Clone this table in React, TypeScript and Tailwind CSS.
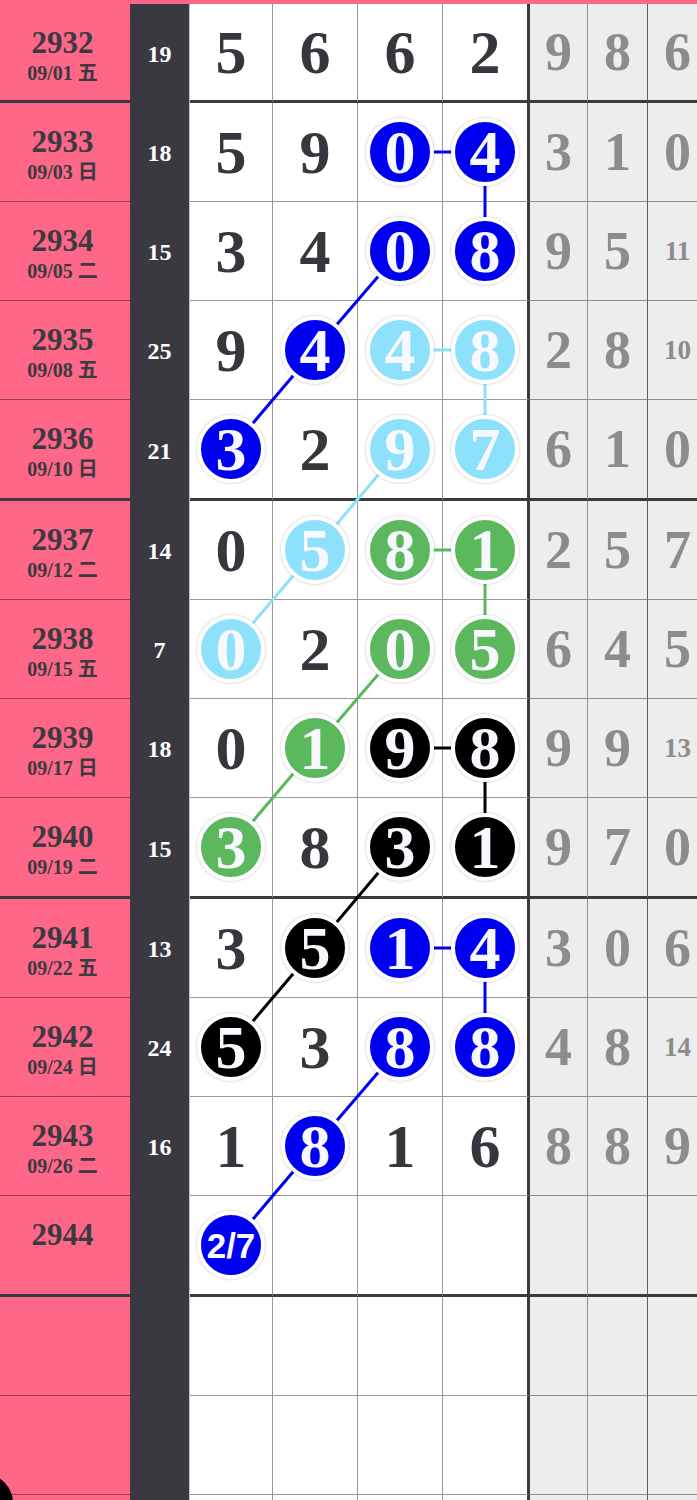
import React from "react";

type Row = {
  id?: string;
  date?: string;
  sum?: number;
  nums?: (number | string)[];
  grey?: number[];
  balls?: Record<number, string>;
};

const BLUE = "#0000f0";
const SKY = "#8ee1fa";
const GREEN = "#5cb85c";
const BLACK = "#000000";

const rows: Row[] = [
  { id: "2932", date: "09/01 五", sum: 19, nums: [5, 6, 6, 2], grey: [9, 8, 6] },
  { id: "2933", date: "09/03 日", sum: 18, nums: [5, 9, 0, 4], grey: [3, 1, 0], balls: { 2: BLUE, 3: BLUE } },
  { id: "2934", date: "09/05 二", sum: 15, nums: [3, 4, 0, 8], grey: [9, 5, 11], balls: { 2: BLUE, 3: BLUE } },
  { id: "2935", date: "09/08 五", sum: 25, nums: [9, 4, 4, 8], grey: [2, 8, 10], balls: { 1: BLUE, 2: SKY, 3: SKY } },
  { id: "2936", date: "09/10 日", sum: 21, nums: [3, 2, 9, 7], grey: [6, 1, 0], balls: { 0: BLUE, 2: SKY, 3: SKY } },
  { id: "2937", date: "09/12 二", sum: 14, nums: [0, 5, 8, 1], grey: [2, 5, 7], balls: { 1: SKY, 2: GREEN, 3: GREEN } },
  { id: "2938", date: "09/15 五", sum: 7, nums: [0, 2, 0, 5], grey: [6, 4, 5], balls: { 0: SKY, 2: GREEN, 3: GREEN } },
  { id: "2939", date: "09/17 日", sum: 18, nums: [0, 1, 9, 8], grey: [9, 9, 13], balls: { 1: GREEN, 2: BLACK, 3: BLACK } },
  { id: "2940", date: "09/19 二", sum: 15, nums: [3, 8, 3, 1], grey: [9, 7, 0], balls: { 0: GREEN, 2: BLACK, 3: BLACK } },
  { id: "2941", date: "09/22 五", sum: 13, nums: [3, 5, 1, 4], grey: [3, 0, 6], balls: { 1: BLACK, 2: BLUE, 3: BLUE } },
  { id: "2942", date: "09/24 日", sum: 24, nums: [5, 3, 8, 8], grey: [4, 8, 14], balls: { 0: BLACK, 2: BLUE, 3: BLUE } },
  { id: "2943", date: "09/26 二", sum: 16, nums: [1, 8, 1, 6], grey: [8, 8, 9], balls: { 1: BLUE } },
  { id: "2944", nums: ["2/7", "", "", ""], balls: { 0: BLUE } },
  {},
  {},
  {},
];

// row 0 closes a group, then groups of four
const isEnd = (i: number) => i === 0 || i % 4 === 0;

const colX = [231, 315, 400, 485];

// center of each row's content box
const centers: number[] = [];
{
  let top = 4;
  rows.forEach((_, i) => {
    const h = i === 0 ? 99 : isEnd(i) ? 101 : 99;
    const b = isEnd(i) ? 3 : 1;
    centers.push(top + (h - b) / 2);
    top += h;
  });
}

const links: { c: string; a: [number, number]; b: [number, number] }[] = [];
[
  [1, BLUE],
  [3, SKY],
  [5, GREEN],
  [7, BLACK],
  [9, BLUE],
].forEach(([r, c]) => {
  const s = r as number;
  const col = c as string;
  links.push({ c: col, a: [2, s], b: [3, s] });
  links.push({ c: col, a: [3, s], b: [3, s + 1] });
  links.push({ c: col, a: [2, s + 1], b: [1, s + 2] });
  links.push({ c: col, a: [1, s + 2], b: [0, s + 3] });
});

function Ball({ color, children }: { color: string; children: React.ReactNode }) {
  const small = typeof children === "string" && children.includes("/");
  return (
    <div
      className="relative z-[2] flex h-[68px] w-[68px] items-center justify-center rounded-full border-4 border-white shadow-[0_0_2px_1px_rgba(0,0,0,0.13)]"
      style={{ backgroundColor: color }}
    >
      {small ? (
        <span className="font-['Liberation_Sans',sans-serif] text-[35px] leading-none text-[#f8f8ff]">
          {children}
        </span>
      ) : (
        <span className="text-[62px] leading-none text-[#f8f8ff]">{children}</span>
      )}
    </div>
  );
}

export default function App() {
  return (
    <div className="relative h-[1500px] w-[697px] overflow-hidden bg-white font-['Liberation_Serif','Noto_Sans_CJK_SC',serif] font-bold">
      <div className="h-[4px] bg-[#fe6787]" />

      {rows.map((row, i) => {
        const end = isEnd(i);
        const h = i === 0 ? "h-[99px]" : end ? "h-[101px]" : "h-[99px]";
        const bb = end ? "border-b-[3px] border-b-[#3a3a40]" : "border-b border-b-black/40";
        return (
          <div key={i} className={`flex ${h}`}>
            {/* issue + date */}
            <div className={`flex w-[130px] shrink-0 flex-col items-center bg-[#fe6787] pr-[5px] pt-[23px] text-[#3a3a40] ${bb}`}>
              {row.id && <div className="text-[31px] leading-none">{row.id}</div>}
              {row.date && <div className="mt-[5px] text-[20px] leading-none">{row.date}</div>}
            </div>

            {/* sum */}
            <div className="flex w-[60px] shrink-0 items-center justify-center border-r border-r-[#c4c4c4] bg-[#3a393f] pt-[1px] text-[24px] leading-none text-white">
              {row.sum}
            </div>

            {/* numbers */}
            {[0, 1, 2, 3].map((c) => {
              const w = ["w-[83px]", "w-[85px]", "w-[85px]", "w-[87px]"][c];
              const br = c === 3 ? "border-r-[3px] border-r-[#3a3a40]" : "border-r border-r-black/40";
              const v = row.nums?.[c];
              const ball = row.balls?.[c];
              return (
                <div key={c} className={`flex ${w} shrink-0 items-center justify-center bg-white ${br} ${bb}`}>
                  {ball ? (
                    <Ball color={ball}>{v}</Ball>
                  ) : (
                    <span className="text-[62px] leading-none text-[#36363c]">{v}</span>
                  )}
                </div>
              );
            })}

            {/* trailing grey columns */}
            {[0, 1, 2].map((c) => {
              const w = c === 0 ? "w-[58px]" : "w-[60px]";
              const br = c === 1 ? "border-r border-r-black/60" : "border-r border-r-black/40";
              const g = row.grey?.[c];
              return (
                <div key={c} className={`flex ${w} shrink-0 items-center justify-center bg-[#ededed] text-[#8c8c8c] ${br} ${bb}`}>
                  {g !== undefined &&
                    (g > 9 ? (
                      <span className="text-[27px] leading-none">{g}</span>
                    ) : (
                      <span className="text-[54px] leading-none">{g}</span>
                    ))}
                </div>
              );
            })}
          </div>
        );
      })}

      {/* trend lines */}
      <svg className="pointer-events-none absolute left-0 top-0 z-[1]" width={697} height={1500}>
        {links.map((l, i) => (
          <line
            key={i}
            x1={colX[l.a[0]]}
            y1={centers[l.a[1]]}
            x2={colX[l.b[0]]}
            y2={centers[l.b[1]]}
            stroke={l.c}
            strokeWidth={3}
          />
        ))}
      </svg>

      {/* floating button, mostly off screen */}
      <div className="absolute left-[-45px] top-[1474px] z-[3] h-[58px] w-[58px] rounded-full bg-black" />
    </div>
  );
}
